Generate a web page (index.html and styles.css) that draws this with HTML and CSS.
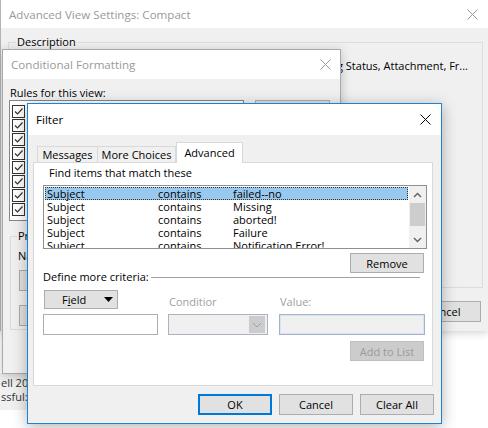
FILE: index.html
```html
<!DOCTYPE html>
<html lang="en">
<head>
  <meta charset="UTF-8">
  <title>Filter</title>
  <link rel="stylesheet" href="styles.css">
</head>
<body>

<div class="desk">

  <!-- back window -->
  <div class="win avs">
    <div class="title">
      <span>Advanced View Settings: Compact</span>
      <svg class="x" width="11" height="11" viewBox="0 0 11 11"><path d="M0.5 0.5L10.5 10.5M10.5 0.5L0.5 10.5"/></svg>
    </div>
    <div class="avs-body">
      <fieldset class="group desc">
        <legend>Description</legend>
        <div class="desc-row">Icon, Flag Status, Attachment, Fr...</div>
      </fieldset>
      <div class="avs-foot"><button class="btn wide">Cancel</button></div>
    </div>
  </div>

  <div class="strip">ell 2019<br>ssful:</div>

  <!-- conditional formatting -->
  <div class="win cf">
    <div class="title">
      <span>Conditional Formatting</span>
      <svg class="x" width="11" height="11" viewBox="0 0 11 11"><path d="M0.5 0.5L10.5 10.5M10.5 0.5L0.5 10.5"/></svg>
    </div>
    <div class="cf-body">
      <div class="cf-lbl">Rules for this view:</div>
      <div class="cf-top">
        <div class="rules" id="rules"></div>
        <button class="btn wide">Add</button>
      </div>
      <fieldset class="group props">
        <legend>Properties</legend>
        <div class="name-lbl">Name:</div>
        <button class="btn wide first">Font...</button>
        <button class="btn wide second">Condition...</button>
      </fieldset>
    </div>
  </div>

  <!-- filter dialog -->
  <div class="win filter">
    <div class="title active">
      <span>Filter</span>
      <svg class="x" width="11" height="11" viewBox="0 0 11 11"><path d="M0.5 0.5L10.5 10.5M10.5 0.5L0.5 10.5"/></svg>
    </div>
    <div class="fbody">
      <div class="tabs">
        <div class="tab t1">Messages</div>
        <div class="tab t2">More Choices</div>
        <div class="tab sel">Advanced</div>
      </div>
      <div class="panel">
        <div class="find-lbl">Find items that match these</div>
        <div class="list">
          <div class="rows" id="rows"></div>
          <div class="sb">
            <div class="sb-btn"><svg width="9" height="6" viewBox="0 0 9 6"><path d="M1 5L4.5 1.5L8 5"/></svg></div>
            <div class="track"><div class="thumb"></div></div>
            <div class="sb-btn"><svg width="9" height="6" viewBox="0 0 9 6"><path d="M1 1L4.5 4.5L8 1"/></svg></div>
          </div>
        </div>
        <button class="btn act">Remove</button>
        <div class="define"><span>Define more criteria:</span><span class="rule-line"></span></div>
        <div class="crit">
          <button class="btn field">F<u>i</u>eld
            <svg width="9" height="5" viewBox="0 0 9 5"><polygon points="0,0 9,0 4.5,5"/></svg>
          </button>
          <div class="dis-lbl">Conditior</div>
          <div class="dis-lbl">Value:</div>
          <div class="input"></div>
          <div class="combo"><span class="drop"><svg width="10" height="6" viewBox="0 0 10 6"><path d="M1 1L5 5L9 1"/></svg></span></div>
          <div class="input dis"></div>
        </div>
        <button class="btn act off">Add to List</button>
      </div>
      <div class="ffoot">
        <button class="btn def">OK</button>
        <button class="btn">Cancel</button>
        <button class="btn">Clear All</button>
      </div>
    </div>
  </div>

</div>

<script>
  const items = [
    ['Subject', 'contains', 'failed--no'],
    ['Subject', 'contains', 'Missing'],
    ['Subject', 'contains', 'aborted!'],
    ['Subject', 'contains', 'Failure'],
    ['Subject', 'contains', 'Notification Error!']
  ];
  const rows = document.getElementById('rows');
  items.forEach((it, i) => {
    const row = document.createElement('div');
    row.className = i === 0 ? 'row hi' : 'row';
    for (let txt of it) {
      const c = document.createElement('span');
      c.textContent = txt;
      row.appendChild(c);
    }
    rows.appendChild(row);
  });

  const rules = document.getElementById('rules');
  for (let i = 0; i < 8; i++) {
    const r = document.createElement('div');
    r.className = 'rule';
    r.innerHTML = '<span class="chk"><svg width="11" height="11" viewBox="0 0 11 11"><path d="M2 5.5L4.5 8L9.5 2.5"/></svg></span>';
    rules.appendChild(r);
  }
</script>

</body>
</html>
```

FILE: styles.css
```css
* {
  box-sizing: border-box;
}

body {
  margin: 0;
  font-family: 'Open Sans', 'Noto Sans', sans-serif;
  font-size: 11px;
  color: #000;
  background: #fff;
}

.desk {
  position: relative;
  width: 488px;
  height: 428px;
  overflow: hidden;
}

.win {
  position: absolute;
  background: #f0f0f0;
}

.title {
  display: flex;
  align-items: center;
  justify-content: space-between;
  background: #fff;
  color: #9a9a9a;
  font-size: 11.6px;
  white-space: nowrap;
}

.title .x {
  stroke: #9a9a9a;
  stroke-width: 1;
  fill: none;
}

.title.active {
  color: #000;
}

.title.active .x {
  stroke: #000;
}

.btn {
  font: inherit;
  width: 74px;
  height: 21px;
  padding: 0;
  background: #e1e1e1;
  border: 1px solid #adadad;
  color: #000;
  display: block;
}

.btn.wide {
  width: 75px;
}

fieldset.group {
  margin: 0;
  padding: 0;
  min-width: 0;
  border: 1px solid #dcdcdc;
}

fieldset.group legend {
  padding: 0 1px;
  line-height: 14px;
}

/* back window */
.avs {
  left: 0;
  top: 0;
  width: 488px;
  height: 331px;
  border-left: 1px solid #b4b4b4;
  box-shadow: 0 2px 8px rgba(0,0,0,0.18);
}

.avs .title {
  height: 28px;
  padding: 0 10px 0 8px;
}

.avs-body {
  padding-top: 7px;
}

.desc {
  margin-left: 7px !important;
  width: 475px;
  height: 253px;
}

.desc legend {
  margin-left: 7px;
}

.desc-row {
  margin-top: 10px;
  line-height: 14px;
  text-align: right;
  padding-right: 14px;
  white-space: nowrap;
}

.avs-foot {
  margin-top: 13px;
  display: flex;
  justify-content: flex-end;
  padding-right: 7px;
}

.strip {
  position: absolute;
  left: 0;
  top: 373px;
  width: 27px;
  height: 37px;
  padding: 3px 0 0 1px;
  line-height: 14px;
  color: #333;
  background: #f0f0f0;
  white-space: nowrap;
  overflow: hidden;
}

/* conditional formatting */
.cf {
  left: 2px;
  top: 49px;
  width: 339px;
  height: 325px;
  border: 1px solid #aaa;
  box-shadow: 0 2px 10px rgba(0,0,0,0.22);
}

.cf .title {
  height: 29px;
  padding: 0 9px 0 8px;
}

.cf-body {
  padding: 7px 0 0 6px;
}

.cf-lbl {
  line-height: 14px;
  padding-left: 1px;
}

.cf-top {
  display: flex;
  gap: 11px;
}

.rules {
  width: 235px;
  height: 121px;
  background: #fff;
  border: 1px solid #828790;
  padding: 4px 0 0 2px;
}

.rule {
  height: 14px;
}

.chk {
  display: block;
  width: 13px;
  height: 13px;
  border: 1px solid #333;
  background: #fff;
}

.chk svg {
  display: block;
  stroke: #333;
  stroke-width: 1.2;
  fill: none;
}

.props {
  margin: 8px 0 0 1px !important;
  width: 324px;
  height: 101px;
  padding-left: 7px !important;
}

.props legend {
  margin-left: -1px;
  white-space: nowrap;
}

.name-lbl {
  margin-top: 6px;
  line-height: 14px;
}

.props .btn {
  margin-left: 1px;
}

.props .first {
  margin-top: 7px;
}

.props .second {
  margin-top: 14px;
}

/* filter */
.filter {
  left: 27px;
  top: 103px;
  width: 415px;
  height: 321px;
  border: 1px solid #1883d7;
  box-shadow: 0 3px 14px rgba(0,0,0,0.3);
}

.filter .title {
  height: 31px;
  padding: 0 10px 0 8px;
}

.fbody {
  padding: 7px 7px 0 5px;
}

.tabs {
  display: flex;
  align-items: flex-end;
  height: 21px;
  margin-bottom: -1px;
  padding-left: 4px;
  position: relative;
  z-index: 1;
}

.tab {
  height: 16px;
  margin-bottom: 1px;
  border: 1px solid #d9d9d9;
  border-bottom: none;
  display: flex;
  align-items: center;
  justify-content: center;
  white-space: nowrap;
}

.tab.t1 {
  width: 61px;
}

.tab.t2 {
  width: 79px;
  margin-left: -1px;
}

.tab.sel {
  width: 67px;
  height: 21px;
  margin-bottom: 0;
  padding-bottom: 2px;
  background: #fff;
}

.panel {
  width: 400px;
  height: 224px;
  background: #fff;
  border: 1px solid #d9d9d9;
  padding-left: 9px;
}

.find-lbl {
  margin: 2px 0 0 6px;
  line-height: 16px;
}

.list {
  margin-top: 4px;
  width: 384px;
  height: 64px;
  border: 1px solid #8f8f8f;
  display: flex;
}

.rows {
  flex: 1;
  padding: 1px 1px 0 1px;
  overflow: hidden;
}

.row {
  height: 13px;
  line-height: 13px;
  padding-left: 2px;
  display: grid;
  grid-template-columns: 111px 75px 1fr;
  white-space: nowrap;
}

.row.hi {
  background: #99c9ef;
  outline: 1px dotted #333;
  outline-offset: -1px;
}

.sb {
  width: 17px;
  background: #f0f0f0;
  display: flex;
  flex-direction: column;
}

.sb-btn {
  height: 17px;
  display: flex;
  align-items: center;
  justify-content: center;
}

.sb-btn svg {
  stroke: #606060;
  stroke-width: 1.4;
  fill: none;
}

.track {
  flex: 1;
}

.thumb {
  height: 23px;
  margin: 0 1px;
  background: #cdcdcd;
}

.btn.act {
  margin: 4px 0 0 307px;
  height: 20px;
}

.btn.off {
  margin-top: 6px;
  background: #cccccc;
  border-color: #bfbfbf;
  color: #9a9a9a;
}

.define {
  margin-top: -3px;
  width: 377px;
  line-height: 14px;
  display: flex;
  align-items: center;
}

.rule-line {
  flex: 1;
  margin-left: 2px;
  border-top: 1px solid #a0a0a0;
}

.crit {
  margin-top: 6px;
  display: grid;
  grid-template-columns: 125px 111px 146px;
  row-gap: 5px;
}

.btn.field {
  width: 74px;
  height: 19px;
  margin-left: 1px;
  display: flex;
  align-items: center;
  padding: 0 4px 0 17px;
}

.btn.field svg {
  margin-left: auto;
  fill: #000;
}

.dis-lbl {
  align-self: end;
  line-height: 14px;
  padding-left: 1px;
  color: #a0a0a0;
}

.input {
  width: 115px;
  height: 21px;
  border: 1px solid #adadad;
  background: #fff;
}

.input.dis {
  width: 146px;
  border-color: #a4b3c8;
  background: #f0f0f0;
  box-shadow: inset 0 0 0 1px #d6e4f5;
}

.combo {
  width: 100px;
  height: 21px;
  border: 1px solid #a9b3c2;
  background: #f0f0f0;
  display: flex;
  justify-content: flex-end;
  padding: 1px 2px 1px 0;
}

.drop {
  width: 16px;
  background: #cccccc;
  display: flex;
  align-items: center;
  justify-content: center;
}

.drop svg {
  stroke: #a0a0a0;
  stroke-width: 1;
  fill: none;
}

.ffoot {
  margin-top: 8px;
  display: flex;
  justify-content: flex-end;
  gap: 7px;
}

.btn.def {
  border: 2px solid #0078d7;
}
```
